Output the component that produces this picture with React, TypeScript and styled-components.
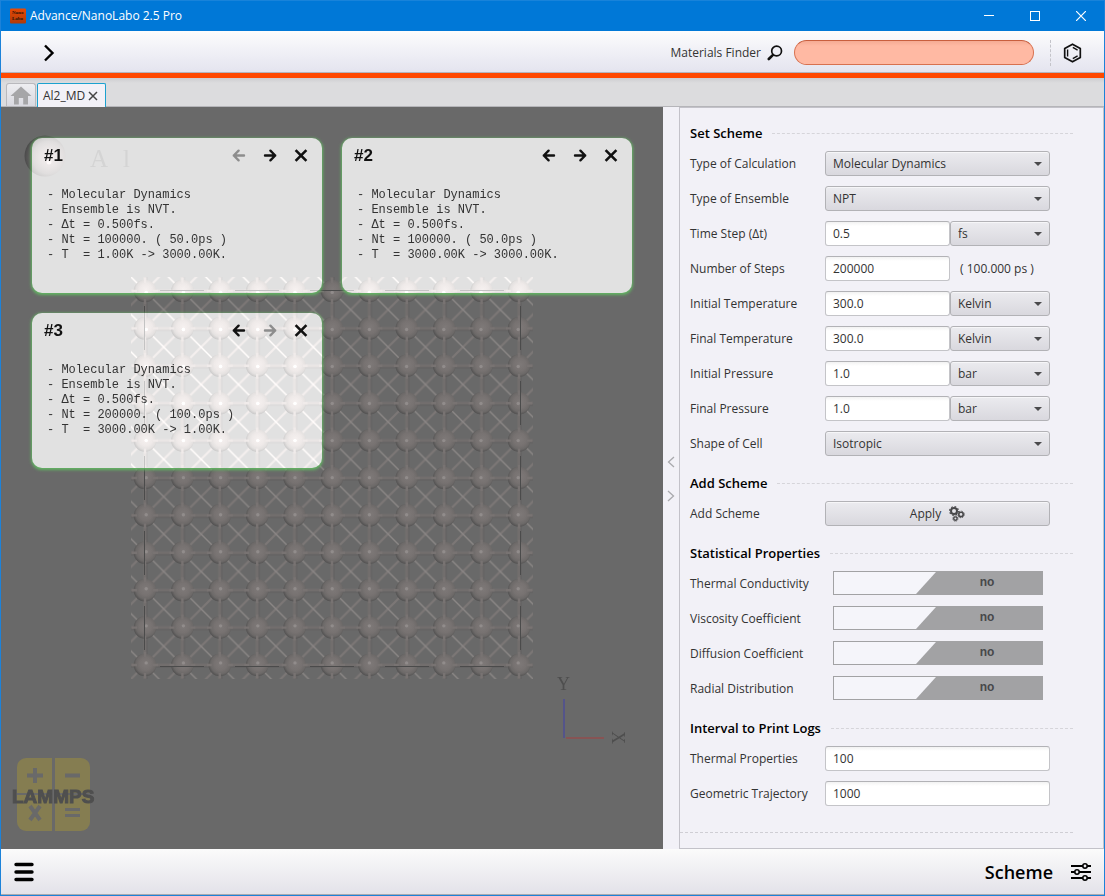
import React, { useState } from "react";
import styled, { createGlobalStyle } from "styled-components";

const GlobalStyle = createGlobalStyle`
  *, *::before, *::after { box-sizing: border-box; }
  body {
    margin: 0;
    font-family: "Open Sans", "Noto Sans", sans-serif;
    font-size: 12px;
    color: #333;
  }
  button, input, select { font: inherit; color: inherit; margin: 0; }
  button { cursor: pointer; }
`;

/* ---------- window frame ---------- */

const Window = styled.div`
  display: flex;
  flex-direction: column;
  min-height: 100vh;
  border: 1px solid #1c82d9;
  border-top: 0;
  background: #f2f1f7;
`;

const TitleBar = styled.header`
  display: flex;
  align-items: center;
  height: 31px;
  padding-left: 8px;
  background: #0078d7;
  border-top: 1px solid #1883da;
  color: #fff;
`;

const AppTitle = styled.h1`
  flex: 1;
  margin: 0 0 0 4px;
  font-size: 12px;
  font-weight: 400;
  line-height: 16px;
`;

const WindowButton = styled.button`
  display: flex;
  align-items: center;
  justify-content: center;
  width: 46px;
  height: 30px;
  padding: 0;
  border: 0;
  background: none;
`;

const Toolbar = styled.div`
  display: flex;
  align-items: center;
  height: 42px;
  padding: 2px 20px 0 36px;
  background: linear-gradient(#fcfcfd, #e4e4ef);
  border-bottom: 1px solid #b4b4bc;
`;

const IconButton = styled.button`
  display: flex;
  align-items: center;
  justify-content: center;
  width: 24px;
  height: 24px;
  padding: 0;
  border: 0;
  background: none;
`;

const FinderLabel = styled.label`
  display: flex;
  align-items: center;
  gap: 6px;
  margin-left: auto;
`;

const FinderInput = styled.input`
  width: 240px;
  height: 25px;
  margin-left: 11px;
  padding: 0 12px;
  border: 1px solid #d8714f;
  border-top-color: #c95f3e;
  border-radius: 13px;
  background: linear-gradient(#f5ab94, #ffb9a3 5px);
`;

const ToolDivider = styled.div`
  height: 26px;
  margin: 0 9px 0 16px;
  border-left: 1px dashed #c4c4ca;
`;

const Accent = styled.div`
  height: 5px;
  background: #ff4800;
`;

const TabBar = styled.nav`
  display: flex;
  align-items: flex-end;
  gap: 1px;
  height: 29px;
  padding-left: 5px;
  background: linear-gradient(#cdcdd0, #dcdcde 5px);
  border-bottom: 1px solid #b5b5b9;
`;

const HomeTab = styled.button`
  display: flex;
  align-items: center;
  justify-content: center;
  width: 30px;
  height: 23px;
  padding: 0;
  border: 1px solid #b9b9bd;
  border-bottom: 0;
  border-radius: 3px 3px 0 0;
  background: linear-gradient(#eeeef1, #d9d9e0);
`;

const Tab = styled.div`
  display: flex;
  align-items: center;
  gap: 3px;
  height: 24px;
  margin-bottom: -1px;
  padding: 0 7px 0 5px;
  border: 1px solid #1ba1cf;
  border-bottom: 0;
  border-radius: 2px 2px 0 0;
  background: #f2f1f7;
`;

const TabClose = styled.button`
  display: flex;
  padding: 0;
  border: 0;
  background: none;
`;

const Body = styled.main`
  flex: 1;
  display: grid;
  grid-template-columns: minmax(0, 1fr) 16px 425px;
`;

/* ---------- viewer ---------- */

const Viewer = styled.section`
  position: relative;
  isolation: isolate;
  overflow: hidden;
  padding: 31px 0 20px 31px;
  background: #696969;
`;

const SceneSvg = styled.svg`
  position: absolute;
  top: 0;
  left: 0;
`;

const LogoSvg = styled.svg`
  position: absolute;
  left: 10px;
  bottom: 15px;
`;

const CardGrid = styled.div`
  display: grid;
  grid-template-columns: repeat(auto-fill, 290px);
  gap: 20px;
`;

const Card = styled.article`
  position: relative;
  height: 155px;
  border-radius: 10px;
  box-shadow: 0 1px 3px 1px #62b562;
  color: #333;

  &::before {
    content: "";
    position: absolute;
    inset: 0;
    border-radius: 10px;
    background: #787878;
    mix-blend-mode: plus-lighter;
  }
`;

const CardHead = styled.div`
  position: relative;
  display: flex;
  align-items: center;
  gap: 7px;
  height: 35px;
  padding: 0 9px 0 12px;
`;

const CardTitle = styled.h2`
  flex: 1;
  margin: 0;
  font: bold 17px/20px "Liberation Sans", Arial, sans-serif;
  color: #111;
`;

const CardText = styled.pre`
  position: relative;
  margin: 15px 0 0 15px;
  font: 12px/15px "Liberation Mono", "Courier New", monospace;
`;

const StepButton = styled(IconButton)`
  color: #111;
  &:disabled { color: #8d8d8d; cursor: default; }
`;

/* ---------- side panel ---------- */

const Splitter = styled.div`
  display: flex;
  flex-direction: column;
  align-items: center;
  justify-content: center;
  gap: 22px;
  padding-top: 2px;
`;

const SplitButton = styled.button`
  display: flex;
  padding: 0;
  border: 0;
  background: none;
`;

const Panel = styled.form`
  padding: 15px 30px 15px 10px;
  border: 1px solid #c3c2c9;
`;

const Section = styled.fieldset`
  display: flex;
  flex-direction: column;
  gap: 10px;
  min-width: 0;
  margin: 0 0 17px;
  padding: 0;
  border: 0;
`;

const SectionHead = styled.legend`
  display: flex;
  align-items: center;
  gap: 10px;
  width: 100%;
  height: 20px;
  margin-bottom: 8px;
  padding: 0;
  font-size: 13px;
  font-weight: 600;
  line-height: 20px;
  color: #000;

  &::after {
    content: "";
    flex: 1;
    border-top: 1px dashed #d6d5da;
  }
`;

const Row = styled.div`
  display: grid;
  grid-template-columns: 135px 225px;
  align-items: center;
  height: 25px;
`;

const Controls = styled.div`
  display: flex;
  align-items: center;
`;

const TextInput = styled.input<{ $short?: boolean }>`
  width: ${(p) => (p.$short ? "125px" : "100%")};
  height: 25px;
  padding: 0 7px;
  border: 1px solid #c4c4c8;
  border-top-color: #b2b2b6;
  border-radius: 3px;
  background: linear-gradient(#f2f2f2, #fff 4px);
`;

const SelectBox = styled.div`
  position: relative;
  flex: 1;

  &::after {
    content: "";
    position: absolute;
    top: 11px;
    right: 8px;
    border: 4px solid transparent;
    border-top-color: #4a4a4c;
    border-bottom-width: 0;
    pointer-events: none;
  }
`;

const SelectInput = styled.select`
  display: block;
  width: 100%;
  height: 25px;
  padding: 0 20px 0 7px;
  appearance: none;
  border: 1px solid #b2b2b6;
  border-radius: 3px;
  background: linear-gradient(#ebebef, #d9d8de);
  box-shadow: inset 0 1px 0 #f6f6f8;
`;

const Note = styled.span`
  padding-left: 10px;
`;

const ApplyButton = styled.button`
  display: flex;
  align-items: center;
  justify-content: center;
  gap: 8px;
  width: 100%;
  height: 25px;
  border: 1px solid #b2b2b6;
  border-radius: 3px;
  background: linear-gradient(#ebebef, #d9d8de);
  box-shadow: inset 0 1px 0 #f6f6f8;
  font-weight: 500;
`;

const Toggle = styled.span<{ $on: boolean }>`
  position: relative;
  align-self: start;
  display: block;
  width: 210px;
  height: 24px;
  margin-left: 8px;
  border: 1px solid #a2a2a4;
  background: #f5f5fa;
  font: bold 12px/21px "Liberation Sans", Arial, sans-serif;

  &::before {
    content: "";
    position: absolute;
    inset: 0;
    background: #a2a2a4;
    clip-path: ${(p) =>
      p.$on
        ? "polygon(0 0, 124px 0, 104px 100%, 0 100%)"
        : "polygon(102px 0, 100% 0, 100% 100%, 82px 100%)"};
  }
`;

const ToggleText = styled.span`
  position: relative;
  display: block;
  width: 98px;
  margin-left: 104px;
  text-align: center;
  color: #48484a;
`;

const ToggleInput = styled.input`
  position: absolute;
  inset: 0;
  width: 100%;
  height: 100%;
  opacity: 0;
`;

const EndRule = styled.hr`
  margin: 26px 0 0 -10px;
  border: 0;
  border-top: 1px dashed #cfced4;
`;

const Footer = styled.footer`
  display: flex;
  align-items: center;
  justify-content: space-between;
  height: 46px;
  padding: 0 12px 0 11px;
  background: linear-gradient(#fbfbfb, #e3e2e9);
  border-bottom: 1px solid #a9a9b0;
`;

const SchemeButton = styled.button`
  display: flex;
  align-items: center;
  gap: 17px;
  padding: 0;
  border: 0;
  background: none;
  font-size: 18px;
  font-weight: 600;
  line-height: 24px;
  color: #000;
`;

/* ---------- drawings ---------- */

const PITCH = 37.4;
const X0 = 145;
const Y0 = 291;
const indices = Array.from({ length: 11 }, (_, i) => i);

function LatticeAtom({ col, row }: { col: number; row: number }) {
  return (
    <g transform={`translate(${X0 + col * PITCH} ${Y0 + row * PITCH})`}>
      <circle r="11.3" fill="url(#atom)" />
      <path d="M-13 0H-8M8 0H13M0 -13V-8M0 8V13" stroke="#787372" strokeWidth="2.4" />
      <circle cx={1.2 - col * 0.2} cy={1.4 - row * 0.35} r="1.7" fill="#918c8b" />
    </g>
  );
}

function Scene() {
  const end = PITCH * 10;
  return (
    <SceneSvg width="662" height="742" viewBox="1 107 662 742" aria-hidden="true">
      <defs>
        <radialGradient id="atom" cx="0.54" cy="0.45" r="0.56">
          <stop offset="0" stopColor="#7e7978" />
          <stop offset="0.5" stopColor="#777271" />
          <stop offset="0.78" stopColor="#6c6968" />
          <stop offset="1" stopColor="#525151" />
        </radialGradient>
        <radialGradient id="bigAtom" cx="0.6" cy="0.54" r="0.62">
          <stop offset="0" stopColor="#7b7676" />
          <stop offset="0.35" stopColor="#736f6f" />
          <stop offset="0.64" stopColor="#686666" />
          <stop offset="0.85" stopColor="#575656" />
          <stop offset="1" stopColor="#484848" />
        </radialGradient>
        <pattern id="bonds" x={X0} y={Y0} width={PITCH} height={PITCH} patternUnits="userSpaceOnUse">
          <path d={`M0 0H${PITCH}M0 0V${PITCH}M0 ${PITCH}H${PITCH}M${PITCH} 0V${PITCH}`} stroke="#726e6d" strokeWidth="3" />
          <path d={`M0 2H${PITCH}M2 0V${PITCH}`} stroke="#5e5d5d" strokeWidth="0.8" />
          <path d={`M0 ${PITCH}L${PITCH} 0`} stroke="#7c7776" strokeWidth="2" />
          <path d={`M0 0L${PITCH} ${PITCH}`} stroke="#8b8786" strokeWidth="1.4" />
        </pattern>
      </defs>
      <rect x={X0 - 14} y={Y0 - 14} width={end + 28} height={end + 28} fill="url(#bonds)" />
      {indices.map((row) =>
        indices.map((col) => <LatticeAtom key={`${row}-${col}`} col={col} row={row} />)
      )}
      <g stroke="#4b4b4b" strokeWidth="1" strokeDasharray="44 31" fill="none">
        <path d="M160 290.5H519M160 666.5H519M144.5 306V664M520.5 306V664" />
      </g>
      <circle cx="45" cy="156" r="20.5" fill="url(#bigAtom)" />
      <circle cx="49" cy="162" r="2.5" fill="#858181" />
      <g fill="#5c5c5c" fontFamily="Liberation Serif, serif" fontSize="25">
        <text x="90" y="167">A</text>
        <text x="123" y="167">l</text>
      </g>
      <path d="M564 699V738" stroke="#54548a" strokeWidth="2" />
      <path d="M566 738H604" stroke="#875454" strokeWidth="2" />
      <g fill="#4e4e4e" fontFamily="Liberation Serif, serif" fontSize="18">
        <text x="557" y="690">Y</text>
        <text transform="translate(612 731) rotate(90)">X</text>
      </g>
    </SceneSvg>
  );
}

function Logo() {
  return (
    <LogoSvg width="90" height="80" viewBox="11 754 90 80" role="img" aria-label="LAMMPS">
      <g fill="#857d51">
        <path d="M26 758H52V793H17V767a9 9 0 0 1 9-9Z" />
        <path d="M55 758H81a9 9 0 0 1 9 9V793H55Z" />
        <path d="M17 795H52V831H26a9 9 0 0 1-9-9Z" />
        <path d="M55 795H90V822a9 9 0 0 1-9 9H55Z" />
      </g>
      <g stroke="#696969" strokeWidth="4" fill="none">
        <path d="M27 775.5H43M35 768V783" />
        <path d="M65 775.5H80" />
        <path d="M65 809.5H80M65 815.5H80" strokeWidth="3" />
        <path d="M30 806L40 820M40 806L30 820" />
      </g>
      <text
        x="12"
        y="803"
        fill="#4f4f4f"
        stroke="#4f4f4f"
        strokeWidth="1"
        fontFamily="Liberation Sans, Arial, sans-serif"
        fontWeight="700"
        fontSize="19"
      >
        LAMMPS
      </text>
    </LogoSvg>
  );
}

function ArrowIcon({ flip }: { flip?: boolean }) {
  return (
    <svg width="14" height="14" viewBox="0 0 14 14" fill="none" stroke="currentColor" strokeWidth="2.4" strokeLinecap="round" strokeLinejoin="round">
      <path d={flip ? "M2 6.5H12.2M7.4 1.7L12.2 6.5L7.4 11.3" : "M12 6.5H1.8M6.6 1.7L1.8 6.5L6.6 11.3"} />
    </svg>
  );
}

function CrossIcon() {
  return (
    <svg width="14" height="14" viewBox="0 0 14 14" fill="none" stroke="currentColor" strokeWidth="2.6">
      <path d="M1.6 1.1L12.4 11.9M12.4 1.1L1.6 11.9" />
    </svg>
  );
}

function GearsIcon() {
  return (
    <svg width="16" height="16" viewBox="0 0 16 16" fill="none" stroke="#48484a">
      <circle cx="5" cy="5" r="3" strokeWidth="2" />
      <circle cx="5" cy="5" r="4.4" strokeWidth="1.2" strokeDasharray="1.7 1.75" />
      <circle cx="12" cy="8.4" r="2.2" strokeWidth="1.6" />
      <circle cx="12" cy="8.4" r="3.3" strokeWidth="1" strokeDasharray="1.3 1.3" />
      <circle cx="6.4" cy="12.6" r="1.7" strokeWidth="1.4" />
      <circle cx="6.4" cy="12.6" r="2.6" strokeWidth="1" strokeDasharray="1 1.04" />
    </svg>
  );
}

/* ---------- parts ---------- */

interface Step {
  title: string;
  lines: string[];
  first?: boolean;
  last?: boolean;
}

const steps: Step[] = [
  {
    title: "#1",
    first: true,
    lines: ["- Molecular Dynamics", "- Ensemble is NVT.", "- Δt = 0.500fs.", "- Nt = 100000. ( 50.0ps )", "- T  = 1.00K -> 3000.00K."],
  },
  {
    title: "#2",
    lines: ["- Molecular Dynamics", "- Ensemble is NVT.", "- Δt = 0.500fs.", "- Nt = 100000. ( 50.0ps )", "- T  = 3000.00K -> 3000.00K."],
  },
  {
    title: "#3",
    last: true,
    lines: ["- Molecular Dynamics", "- Ensemble is NVT.", "- Δt = 0.500fs.", "- Nt = 200000. ( 100.0ps )", "- T  = 3000.00K -> 1.00K."],
  },
];

function SchemeCard({ title, lines, first, last }: Step) {
  return (
    <Card>
      <CardHead>
        <CardTitle>{title}</CardTitle>
        <StepButton aria-label="Move back" disabled={first}><ArrowIcon /></StepButton>
        <StepButton aria-label="Move forward" disabled={last}><ArrowIcon flip /></StepButton>
        <StepButton aria-label="Remove"><CrossIcon /></StepButton>
      </CardHead>
      <CardText>{lines.join("\n")}</CardText>
    </Card>
  );
}

function Select({ id, label, options }: { id?: string; label?: string; options: string[] }) {
  return (
    <SelectBox>
      <SelectInput id={id} aria-label={label}>
        {options.map((o) => <option key={o}>{o}</option>)}
      </SelectInput>
    </SelectBox>
  );
}

function SelectRow({ id, label, value }: { id: string; label: string; value: string }) {
  return (
    <Row>
      <label htmlFor={id}>{label}</label>
      <Select id={id} options={[value]} />
    </Row>
  );
}

function UnitRow({ id, label, value, unit, note }: { id: string; label: string; value: string; unit?: string; note?: string }) {
  return (
    <Row>
      <label htmlFor={id}>{label}</label>
      <Controls>
        <TextInput id={id} $short defaultValue={value} />
        {unit && <Select label={`${label} unit`} options={[unit]} />}
        {note && <Note>{note}</Note>}
      </Controls>
    </Row>
  );
}

function TextRow({ id, label, value }: { id: string; label: string; value: string }) {
  return (
    <Row>
      <label htmlFor={id}>{label}</label>
      <TextInput id={id} defaultValue={value} />
    </Row>
  );
}

function ToggleRow({ id, label }: { id: string; label: string }) {
  const [on, setOn] = useState(false);
  return (
    <Row>
      <label htmlFor={id}>{label}</label>
      <Toggle $on={on}>
        <ToggleText>{on ? "yes" : "no"}</ToggleText>
        <ToggleInput id={id} type="checkbox" checked={on} onChange={(e) => setOn(e.target.checked)} />
      </Toggle>
    </Row>
  );
}

export default function App() {
  return (
    <Window>
      <GlobalStyle />
      <TitleBar>
        <svg width="17" height="16" viewBox="0 0 17 16" aria-hidden="true">
          <defs>
            <linearGradient id="appIcon" x1="0" y1="0" x2="0" y2="1">
              <stop offset="0" stopColor="#e84a05" />
              <stop offset="1" stopColor="#b03a08" />
            </linearGradient>
          </defs>
          <rect x="1" y="0.5" width="16" height="15" rx="1" fill="url(#appIcon)" />
          <g fill="#2a1206" fontFamily="Liberation Serif, serif" fontWeight="700" fontSize="5">
            <text x="3" y="6">Nano</text>
            <text x="3" y="12">Labo</text>
          </g>
        </svg>
        <AppTitle>Advance/NanoLabo 2.5 Pro</AppTitle>
        <WindowButton aria-label="Minimize">
          <svg width="10" height="10" stroke="#fff" fill="none"><path d="M0 4.5H10" /></svg>
        </WindowButton>
        <WindowButton aria-label="Maximize">
          <svg width="10" height="10" stroke="#fff" fill="none"><rect x="0.5" y="0.5" width="9" height="9" /></svg>
        </WindowButton>
        <WindowButton aria-label="Close">
          <svg width="10" height="10" stroke="#fff" strokeWidth="1.2" fill="none"><path d="M0 0L10 10M10 0L0 10" /></svg>
        </WindowButton>
      </TitleBar>

      <Toolbar>
        <IconButton aria-label="Open side panel">
          <svg width="12" height="18" viewBox="0 0 12 18" fill="none" stroke="#000" strokeWidth="2.4">
            <path d="M2 1.5L9.5 9L2 16.5" />
          </svg>
        </IconButton>
        <FinderLabel htmlFor="finder">
          Materials Finder
          <svg width="16" height="16" viewBox="0 0 16 16" fill="none" stroke="#111">
            <circle cx="9.6" cy="6" r="4.9" strokeWidth="1.7" />
            <path d="M6 9.8L1.8 14" strokeWidth="2.6" strokeLinecap="round" />
          </svg>
        </FinderLabel>
        <FinderInput id="finder" />
        <ToolDivider />
        <IconButton aria-label="Molecule">
          <svg width="20" height="20" viewBox="0 0 20 20" fill="none" stroke="#111" strokeWidth="1.7" strokeLinejoin="round">
            <path d="M10.5 1.2L18.3 5.6V14.4L10.5 18.8L2.7 14.4V5.6Z" />
            <path d="M5.6 6.4V13.6M10.8 4.4L15.6 7.1M10.8 15.6L15.6 12.9" strokeWidth="1.4" />
          </svg>
        </IconButton>
      </Toolbar>
      <Accent />

      <TabBar>
        <HomeTab aria-label="Home">
          <svg width="22" height="19" viewBox="0 0 22 19" fill="#a6a6a8">
            <path d="M11 0.5L21.5 10H18V18.5H13.2V12H8.8V18.5H4V10H0.5Z" />
          </svg>
        </HomeTab>
        <Tab>
          Al2_MD
          <TabClose aria-label="Close tab">
            <svg width="10" height="10" viewBox="0 0 10 10" stroke="#444" strokeWidth="1.5">
              <path d="M1 1L9 9M9 1L1 9" />
            </svg>
          </TabClose>
        </Tab>
      </TabBar>

      <Body>
        <Viewer>
          <Scene />
          <Logo />
          <CardGrid>
            {steps.map((s) => <SchemeCard key={s.title} {...s} />)}
          </CardGrid>
        </Viewer>

        <Splitter>
          <SplitButton aria-label="Expand panel">
            <svg width="8" height="12" viewBox="0 0 8 12" fill="none" stroke="#a9a9ad" strokeWidth="1.3"><path d="M7 1L1.5 6L7 11" /></svg>
          </SplitButton>
          <SplitButton aria-label="Collapse panel">
            <svg width="8" height="12" viewBox="0 0 8 12" fill="none" stroke="#a9a9ad" strokeWidth="1.3"><path d="M1 1L6.5 6L1 11" /></svg>
          </SplitButton>
        </Splitter>

        <Panel>
          <Section>
            <SectionHead>Set Scheme</SectionHead>
            <SelectRow id="calc" label="Type of Calculation" value="Molecular Dynamics" />
            <SelectRow id="ensemble" label="Type of Ensemble" value="NPT" />
            <UnitRow id="dt" label="Time Step (Δt)" value="0.5" unit="fs" />
            <UnitRow id="steps" label="Number of Steps" value="200000" note="( 100.000 ps )" />
            <UnitRow id="t0" label="Initial Temperature" value="300.0" unit="Kelvin" />
            <UnitRow id="t1" label="Final Temperature" value="300.0" unit="Kelvin" />
            <UnitRow id="p0" label="Initial Pressure" value="1.0" unit="bar" />
            <UnitRow id="p1" label="Final Pressure" value="1.0" unit="bar" />
            <SelectRow id="cell" label="Shape of Cell" value="Isotropic" />
          </Section>
          <Section>
            <SectionHead>Add Scheme</SectionHead>
            <Row>
              <label htmlFor="apply">Add Scheme</label>
              <ApplyButton id="apply" type="button">Apply <GearsIcon /></ApplyButton>
            </Row>
          </Section>
          <Section>
            <SectionHead>Statistical Properties</SectionHead>
            <ToggleRow id="thermal" label="Thermal Conductivity" />
            <ToggleRow id="viscosity" label="Viscosity Coefficient" />
            <ToggleRow id="diffusion" label="Diffusion Coefficient" />
            <ToggleRow id="radial" label="Radial Distribution" />
          </Section>
          <Section>
            <SectionHead>Interval to Print Logs</SectionHead>
            <TextRow id="thermo" label="Thermal Properties" value="100" />
            <TextRow id="traj" label="Geometric Trajectory" value="1000" />
          </Section>
          <EndRule />
        </Panel>
      </Body>

      <Footer>
        <IconButton aria-label="Menu">
          <svg width="22" height="20" viewBox="0 0 22 20" stroke="#000" strokeWidth="3.4" strokeLinecap="round">
            <path d="M3 2.5H19M3 10H19M3 17.5H19" />
          </svg>
        </IconButton>
        <SchemeButton>
          Scheme
          <svg width="22" height="20" viewBox="0 0 22 20" fill="none" stroke="#000">
            <path d="M1 4H21M1 10H21M1 16H21" strokeWidth="2" />
            <g fill="#efeff3" strokeWidth="1.6">
              <circle cx="15" cy="4" r="2.2" />
              <circle cx="7" cy="10" r="2.2" />
              <circle cx="15" cy="16" r="2.2" />
            </g>
          </svg>
        </SchemeButton>
      </Footer>
    </Window>
  );
}
